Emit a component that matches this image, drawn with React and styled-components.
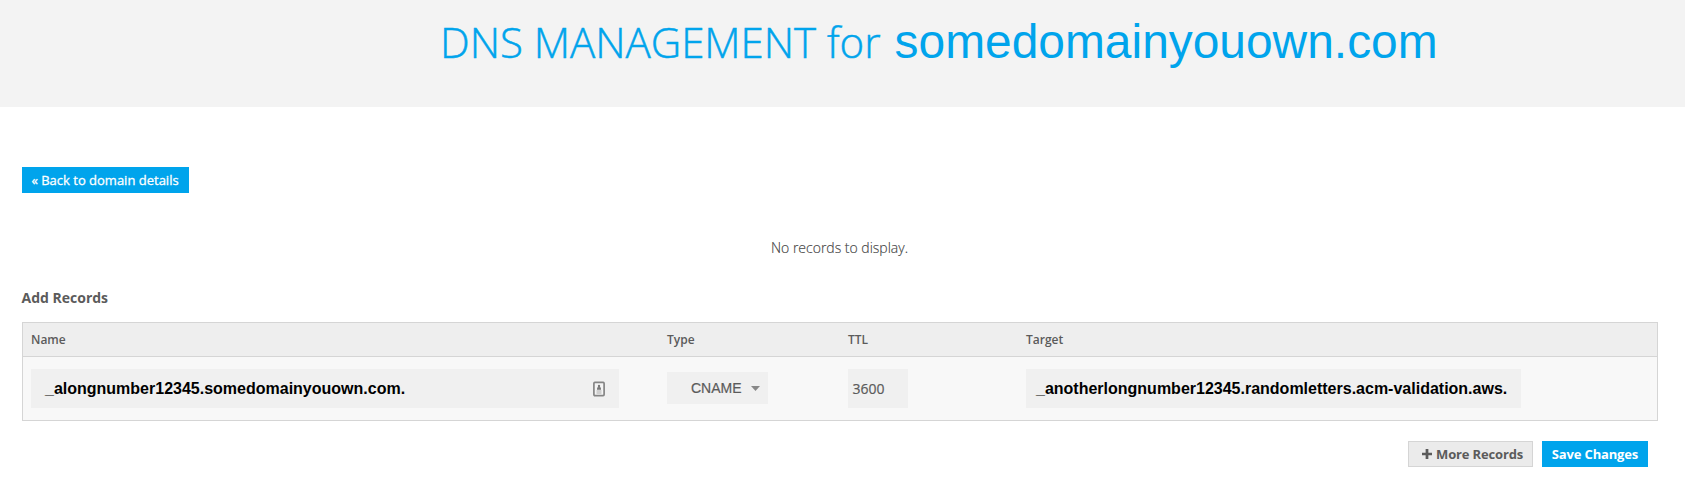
import React from "react";
import styled, { createGlobalStyle } from "styled-components";

const Global = createGlobalStyle`
  * { box-sizing: border-box; }
  body { margin: 0; background: #fff; color: #5b5b5b; font-family: "Open Sans", sans-serif; }
  button, input { font-family: inherit; border: 0; border-radius: 0; margin: 0; }
`;

const Banner = styled.header`
  height: 107px;
  background: #f3f3f3;
  padding: 11px 0 0 440px;
`;
const Title = styled.h1`
  margin: 0;
  display: flex;
  align-items: baseline;
  color: #00a4ec;
  font-size: 42px;
  font-weight: 300;
  line-height: 62px;
  white-space: pre;
  -webkit-text-stroke: 0.5px #00a4ec;
`;
const Domain = styled.span`
  margin-left: 14px;
  font: 400 47.9px/62px "Liberation Sans", Arial, sans-serif;
  -webkit-text-stroke: 0;
`;
const Page = styled.main`
  display: flex;
  flex-direction: column;
  align-items: flex-start;
  padding: 60px 26px 0 22px;
`;
const Button = styled.button`
  display: flex;
  align-items: center;
  justify-content: ${(p) => p.$justify || "center"};
  width: ${(p) => p.$width}px;
  height: 26px;
  padding: 0 9px;
  white-space: nowrap;
  font-size: 13px;
  line-height: 18px;
  font-weight: ${(p) => p.$weight || 700};
  letter-spacing: -0.16px;
  color: ${(p) => (p.$secondary ? "#5b5b5b" : "#fff")};
  background: ${(p) => (p.$secondary ? "#ebebeb" : "#00a4ec")};
  && { border: ${(p) => (p.$secondary ? "1px solid #d5d5d5" : "0")}; }
`;
const BackButton = styled(Button)`
  letter-spacing: 0;
  padding-right: 10px;
  -webkit-text-stroke: 0.3px #fff;
`;
const Empty = styled.p`
  margin: 45px 2px 0 0;
  align-self: center;
  font-size: 14px;
  line-height: 20px;
  font-weight: 300;
  color: #444;
  -webkit-text-stroke: 0.15px #444;
`;
const Subtitle = styled.h2`
  margin: 30px 0 14px -0.5px;
  font-size: 14px;
  line-height: 20px;
  font-weight: 700;
`;
const Table = styled.section`
  width: 1636px;
  border: 1px solid #d5d5d5;
`;
const Row = styled.div`
  display: grid;
  grid-template-columns: 636px 181px 178px 1fr;
  align-items: center;
  padding-left: 8px;
  height: ${(p) => (p.$head ? 34 : 63)}px;
  background: ${(p) => (p.$head ? "#eee" : "#f8f8f8")};
  border-bottom: ${(p) => (p.$head ? "1px solid #d5d5d5" : "0")};
  font-size: 12px;
  font-weight: 600;
`;
const Field = styled.div`
  display: flex;
  align-items: center;
  justify-content: space-between;
  width: ${(p) => p.$width}px;
  height: 39px;
  padding: 0 14px 0 ${(p) => p.$inset}px;
  background: #f0f0f0;
`;
const Value = styled.span`
  color: #000;
  font: 700 16px/20px "Liberation Sans", Arial, sans-serif;
  white-space: nowrap;
`;
const Ttl = styled(Field)`
  padding: 0 0 0 4.5px;
  font-size: 14px;
  font-weight: 400;
  -webkit-text-stroke: 0.2px #5b5b5b;
`;
const Select = styled.div`
  display: flex;
  align-items: center;
  gap: 9px;
  width: 101px;
  height: 32px;
  margin-bottom: 1px;
  padding-left: 24px;
  background: #f0f0f0;
  font: 400 14px/20px "Liberation Sans", Arial, sans-serif;
  -webkit-text-stroke: 0.2px #5b5b5b;
`;
const Actions = styled.div`
  display: flex;
  align-self: flex-end;
  gap: 9px;
  margin: 20px 11px 0 0;
`;
const Plus = styled.svg`
  margin-right: 4px;
`;

export default function App() {
  return (
    <>
      <Global />
      <Banner>
        <Title>
          <span>DNS MANAGEMENT for</span>
          <Domain>somedomainyouown.com</Domain>
        </Title>
      </Banner>
      <Page>
        <BackButton $width={167} $weight={500}>« Back to domain details</BackButton>
        <Empty>No records to display.</Empty>
        <Subtitle>Add Records</Subtitle>
        <Table>
          <Row $head>
            <span>Name</span>
            <span>Type</span>
            <span>TTL</span>
            <span>Target</span>
          </Row>
          <Row>
            <Field $width={588} $inset={14}>
              <Value>_alongnumber12345.somedomainyouown.com.</Value>
              <svg width="12" height="16" viewBox="0 0 12 16">
                <rect x="0.9" y="1.4" width="10.2" height="13.2" rx="1" fill="#f4f4f4" stroke="#858585" strokeWidth="1.7" />
                <circle cx="6" cy="5" r="1.2" fill="#777" />
                <path d="M4 8.7V7.4Q4 6 6 6t2 1.4v1.3z" fill="#777" />
                <path d="M3.5 10h5M3.5 12h5" stroke="#aaa" />
              </svg>
            </Field>
            <Select>
              CNAME
              <svg width="9" height="5" viewBox="0 0 9 5"><path d="M0 0h9L4.5 5z" fill="#888" /></svg>
            </Select>
            <Ttl $width={60}>3600</Ttl>
            <Field $width={495} $inset={10}>
              <Value>_anotherlongnumber12345.randomletters.acm-validation.aws.</Value>
            </Field>
          </Row>
        </Table>
        <Actions>
          <Button $secondary $width={125} $justify="flex-end">
            <Plus width="10" height="10" viewBox="0 0 11 11"><path d="M4 0h3v4h4v3H7v4H4V7H0V4h4z" fill="#5b5b5b" /></Plus>
            More Records
          </Button>
          <Button $width={106}>Save Changes</Button>
        </Actions>
      </Page>
    </>
  );
}
